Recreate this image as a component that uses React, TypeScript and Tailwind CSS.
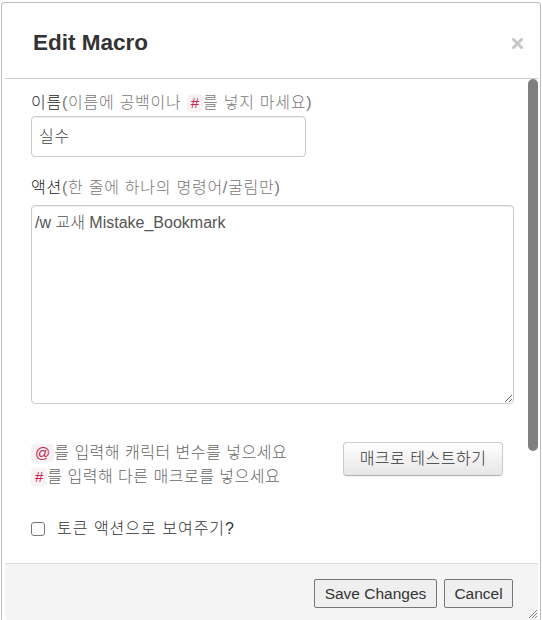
const font = {
  fontFamily: '"Liberation Sans", "Noto Sans CJK KR", Arial, sans-serif',
};

function Code({ children }: { children: string }) {
  return (
    <span className="inline-block rounded-[4px] bg-[#f9f2f4] px-[4px] text-[15px] leading-[18px] tracking-normal text-[#c7254e]">
      {children}
    </span>
  );
}

function CloseIcon() {
  return (
    <svg width="11" height="11" viewBox="0 0 11 11">
      <path d="M1.5 1.5 L9.5 9.5 M9.5 1.5 L1.5 9.5" stroke="#c6c6c6" strokeWidth="3" strokeLinecap="round" />
    </svg>
  );
}

export default function App() {
  return (
    <div className="relative h-[620px] w-[542px] overflow-hidden bg-white" style={font}>
      <div className="ml-[1px] mt-[2px] flex h-[618px] w-[540px] flex-col rounded-t-[4px] border-x border-t border-[#bdbdbd] pl-[3px] pr-[2px]">
        {/* header */}
        <div className="flex h-[76px] shrink-0 items-center justify-between border-b border-[#cfcfcf] pl-[28px] pr-[15px] pt-[5px]">
          <h1 className="text-[22.5px] font-bold text-[#333]">Edit Macro</h1>
          <CloseIcon />
        </div>

        {/* body */}
        <div className="flex min-h-0 flex-1">
          <div className="flex-1 pl-[26px] pr-[8px] pt-[14px] text-[16px] font-light leading-[20px] tracking-[0.75px]">
            <label className="mb-[3px] block text-[#222]">
              이름<span className="text-[#777]">(이름에 공백이나 <Code>#</Code>를 넣지 마세요)</span>
            </label>
            <div className="flex h-[41px] w-[275px] items-center rounded-[4px] border border-[#ccc] px-[7px] text-[#444] shadow-[inset_0_1px_1px_rgba(0,0,0,0.075)]">
              실수
            </div>

            <label className="mb-[7px] mt-[21px] block text-[#222]">
              액션<span className="text-[#777]">(한 줄에 하나의 명령어/굴림만)</span>
            </label>
            <textarea
              className="block h-[199px] w-[483px] rounded-[4px] border border-[#ccc] px-[3px] py-[8px] text-[16px] font-light leading-[18px] tracking-normal text-[#555] shadow-[inset_0_1px_1px_rgba(0,0,0,0.075)] outline-none"
              style={font}
              defaultValue="/w 교새 Mistake_Bookmark"
            />

            <div className="mt-[37px] flex items-start justify-between pr-[17px]">
              <div className="leading-[24px] tracking-[0.5px] text-[#666]">
                <div>
                  <Code>@</Code>를 입력해 캐릭터 변수를 넣으세요
                </div>
                <div>
                  <Code>#</Code>를 입력해 다른 매크로를 넣으세요
                </div>
              </div>
              <button
                type="button"
                className="mt-[1px] h-[34px] w-[160px] rounded-[4px] border border-[#ccc] border-b-[#b3b3b3] bg-gradient-to-b from-white to-[#e6e6e6] text-[16px] font-light tracking-[0.5px] text-[#333] shadow-[inset_0_1px_0_rgba(255,255,255,0.2),0_1px_2px_rgba(0,0,0,0.05)]"
                style={font}
              >
                매크로 테스트하기
              </button>
            </div>

            <label className="mt-[30px] flex h-[20px] items-center gap-[12px] tracking-[1px] text-[#333]">
              <input
                type="checkbox"
                className="h-[14px] w-[14px] appearance-none rounded-[3px] border border-[#767676] bg-white"
              />
              토큰 액션으로 보여주기?
            </label>
          </div>
          {/* scrollbar */}
          <div className="w-[10px] shrink-0">
            <div className="h-[372px] w-[10px] rounded-full bg-[#808080]" />
          </div>
        </div>

        {/* footer */}
        <div className="flex h-[57px] shrink-0 items-start justify-end gap-[7px] rounded-bl-[4px] border-t border-[#ddd] bg-[#f4f4f4] pr-[25px] pt-[15px]">
          <button
            type="button"
            className="h-[29px] w-[123px] rounded-[2px] border border-[#767676] bg-[#efefef] text-[15.5px] text-[#333]"
            style={font}
          >
            Save Changes
          </button>
          <button
            type="button"
            className="h-[29px] w-[69px] rounded-[2px] border border-[#767676] bg-[#efefef] text-[15.5px] text-[#333]"
            style={font}
          >
            Cancel
          </button>
        </div>
      </div>

      {/* resize grip */}
      <svg className="absolute bottom-[1px] right-[4px]" width="10" height="10" viewBox="0 0 10 10">
        <path d="M9 1 L1 9 M9 4 L4 9 M9 7 L7 9" stroke="#888" strokeWidth="1" />
      </svg>
    </div>
  );
}
